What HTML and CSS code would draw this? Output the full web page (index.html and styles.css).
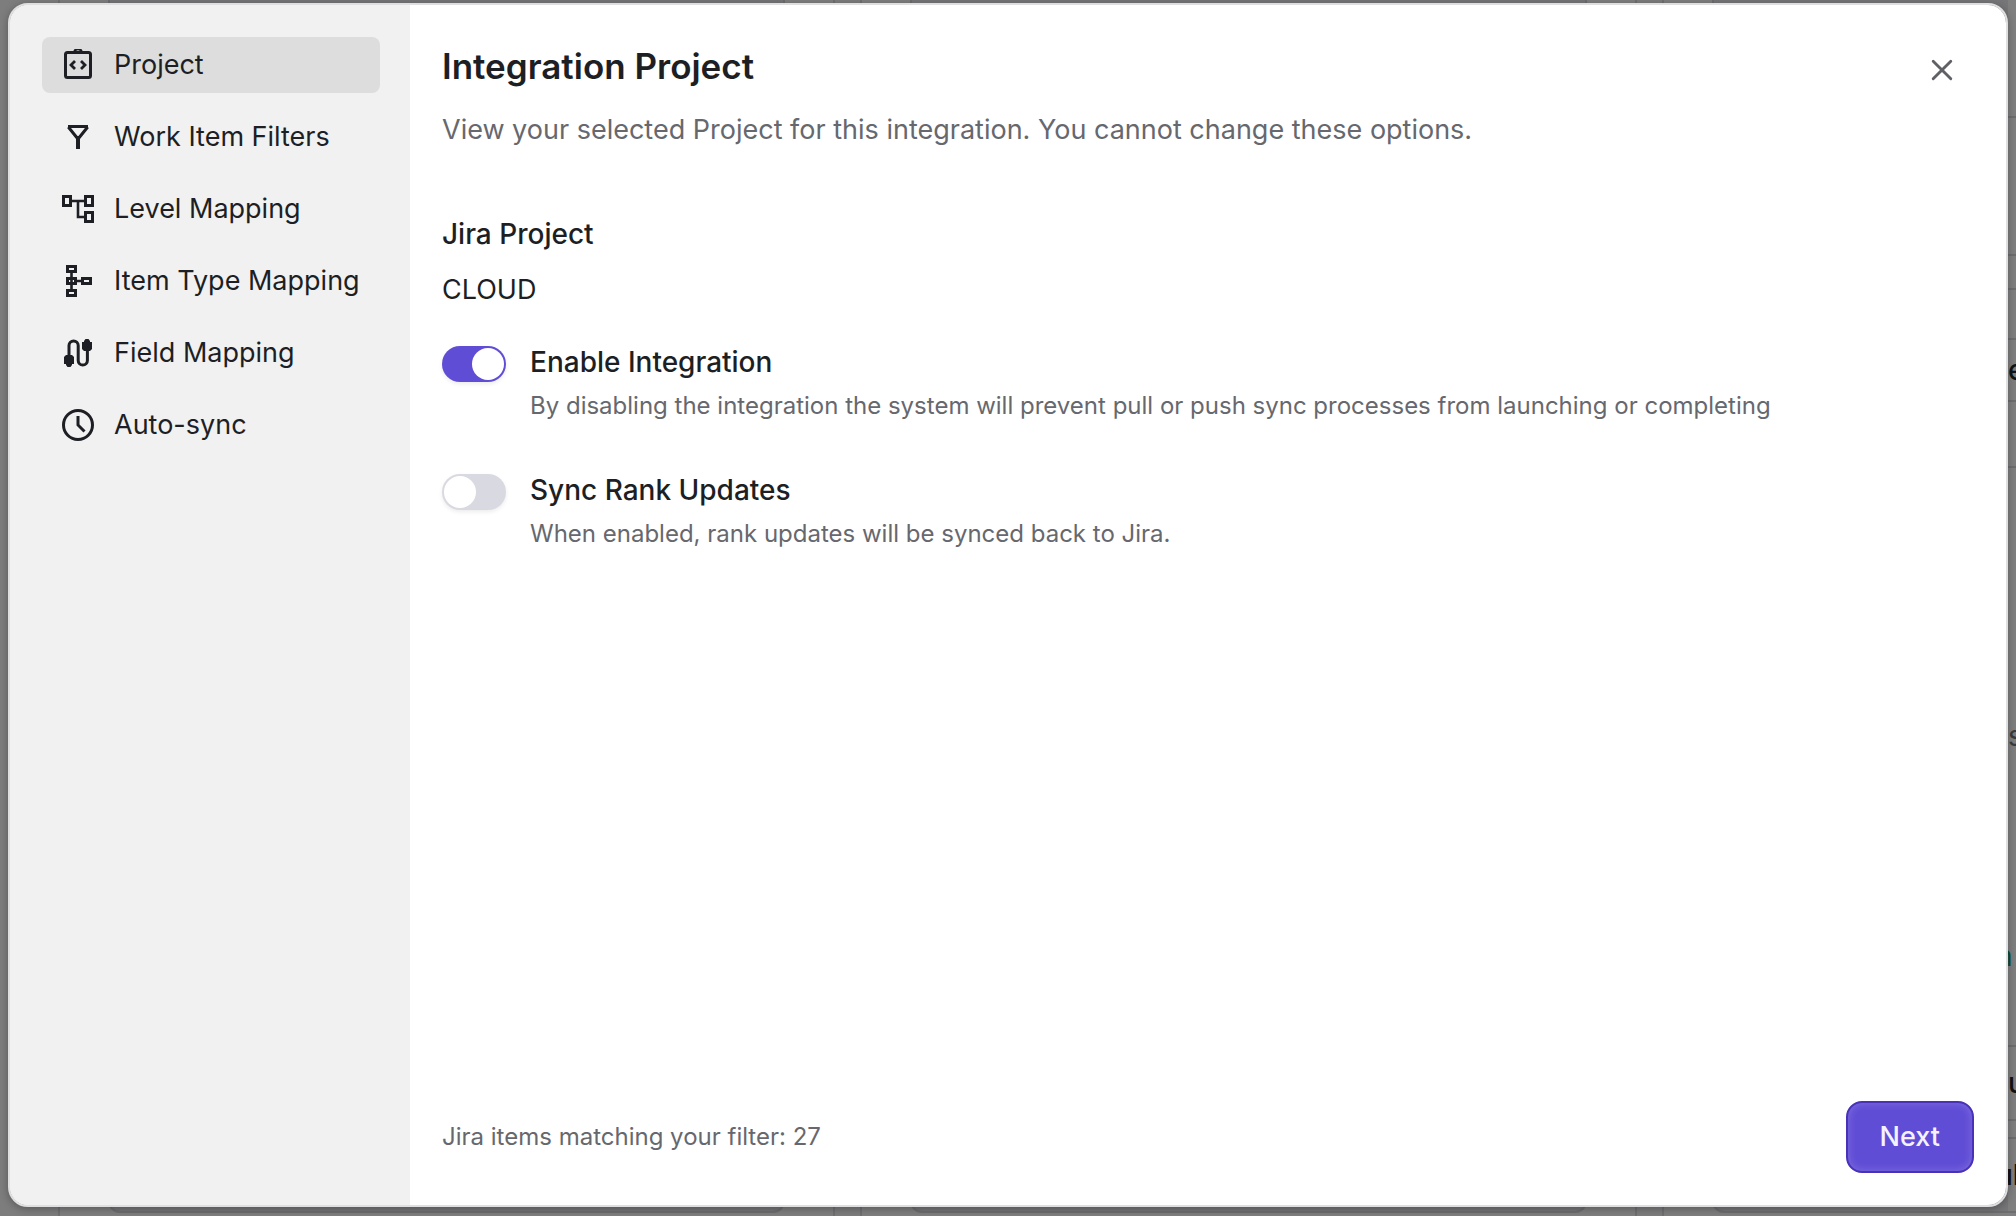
FILE: index.html
```html
<!DOCTYPE html>
<html lang="en">
<head>
<meta charset="utf-8">
<title>Integration Project</title>
<link rel="stylesheet" href="styles.css">
</head>
<body>
<div class="board" aria-hidden="true">
  <div class="board-column"><div class="board-card"></div></div>
  <div class="board-column"><div class="board-card"></div></div>
  <div class="board-column"><div class="board-card"></div></div>
</div>
<div class="board-rows" aria-hidden="true">
  <div class="row row-top"></div>
  <div class="row row-head"></div>
  <div class="row row-gap"></div>
  <div class="row row-bar"></div>
  <div class="row row-title">e</div>
  <div class="row row-line"></div>
  <div class="row row-body"><span class="muted">s</span><span class="accent">n</span></div>
  <div class="row row-title row-tall">u</div>
  <div class="row row-space"></div>
  <div class="row row-title row-tall row-cut">ul</div>
</div>

<div class="modal" role="dialog" aria-labelledby="dialog-title">
  <nav class="sidebar">
    <a class="nav-item active" href="#project">
      <svg class="icon" viewBox="0 0 32 32"><rect x="3.5" y="3.5" width="25" height="25" rx="2" fill="none" stroke="currentColor" stroke-width="3"/><path d="M12.500 3.500a3.500 3.500 0 0 1 7 0" fill="none" stroke="currentColor" stroke-width="2.600"/><path d="M13 12l-4 4 4 4M19 12l4 4-4 4" fill="none" stroke="currentColor" stroke-width="2.800"/></svg>
      <span>Project</span>
    </a>
    <a class="nav-item" href="#filters">
      <svg class="icon" viewBox="0 0 32 32"><path d="M6 5.5h20M6.300 6l9.700 12L25.700 6" fill="none" stroke="currentColor" stroke-width="3"/><path d="M16 15v13" stroke="currentColor" stroke-width="4"/></svg>
      <span>Work Item Filters</span>
    </a>
    <a class="nav-item" href="#levels">
      <svg class="icon" viewBox="0 0 32 32" fill="none" stroke="currentColor" stroke-width="3"><path d="M10 8h12M16 8v16h6" stroke-width="2.600"/><rect x="1.500" y="3.500" width="7" height="9"/><rect x="23.500" y="3.500" width="7" height="9"/><rect x="23.500" y="19.500" width="7" height="9"/></svg>
      <span>Level Mapping</span>
    </a>
    <a class="nav-item" href="#types">
      <svg class="icon" viewBox="0 0 32 32" fill="none" stroke="currentColor" stroke-width="3"><path d="M9.500 8v16M14 16h7" stroke-width="2.600"/><rect x="5.500" y="1.500" width="8" height="5"/><rect x="5.500" y="13.500" width="8" height="5"/><rect x="5.500" y="25.500" width="8" height="5"/><rect x="20.500" y="13.500" width="8" height="5"/></svg>
      <span>Item Type Mapping</span>
    </a>
    <a class="nav-item" href="#fields">
      <svg class="icon" viewBox="0 0 32 32"><path d="M7 20V8.500a4.600 4.600 0 0 1 9.200 0v15a4.600 4.600 0 0 0 9.200 0V12" fill="none" stroke="currentColor" stroke-width="3"/><path d="M4 18h6l2 2v7h-2v1l-1.500 2h-3L4 28v-1H2v-7zM22 4l1.500-2h3L28 4v1h2v7l-2 2h-6l-2-2V5h2z" fill="currentColor"/></svg>
      <span>Field Mapping</span>
    </a>
    <a class="nav-item" href="#autosync">
      <svg class="icon" viewBox="0 0 32 32" fill="none" stroke="currentColor" stroke-width="3"><circle cx="16" cy="16" r="14.500"/><path d="M16 7v9l6.500 6.500"/></svg>
      <span>Auto-sync</span>
    </a>
  </nav>

  <main class="content">
    <header class="header">
      <div class="heading">
        <h1 class="title" id="dialog-title">Integration Project</h1>
        <p class="subtitle">View your selected Project for this integration. You cannot change these options.</p>
      </div>
      <button class="close" type="button" aria-label="Close">
        <svg class="close-icon" viewBox="0 0 20 20"><path d="M2 2l16 16M18 2L2 18" fill="none" stroke="currentColor" stroke-width="2.600" stroke-linecap="round"/></svg>
      </button>
    </header>

    <dl class="project">
      <dt class="project-label">Jira Project</dt>
      <dd class="project-value">CLOUD</dd>
    </dl>

    <div class="options">
      <div class="option">
        <input class="switch" type="checkbox" id="enable" aria-describedby="enable-help" checked>
        <div class="option-text">
          <label class="option-label" for="enable">Enable Integration</label>
          <p class="option-help" id="enable-help">By disabling the integration the system will prevent pull or push sync processes from launching or completing</p>
        </div>
      </div>
      <div class="option">
        <input class="switch" type="checkbox" id="rank" aria-describedby="rank-help">
        <div class="option-text">
          <label class="option-label" for="rank">Sync Rank Updates</label>
          <p class="option-help" id="rank-help">When enabled, rank updates will be synced back to Jira.</p>
        </div>
      </div>
    </div>

    <footer class="footer">
      <p class="match-count">Jira items matching your filter: 27</p>
      <button class="next" type="button">Next</button>
    </footer>
  </main>
</div>
</body>
</html>
```

FILE: styles.css
```css
* {
  box-sizing: border-box;
}

body {
  margin: 0;
  min-height: 100vh;
  padding: 3px 8px 9px;
  display: flex;
  position: relative;
  overflow: hidden;
  background: #7d7d7e;
  color: #1d1f24;
  font-family: Inter, "Liberation Sans", sans-serif;
  font-size: 27px;
  line-height: 40px;
}

h1, p, dl, dd {
  margin: 0;
}

/* Dimmed board behind the dialog */
.board {
  position: absolute;
  inset: 0;
  padding-left: 58px;
  display: flex;
  gap: 25px;
  overflow: hidden;
}

.board-column {
  flex: 0 0 777px;
  padding: 0 48px 3px;
  display: flex;
  border: solid #707073;
  border-width: 0 2px;
  background: #7f7f7f;
}

.board-card {
  flex: 1;
  border: 2px solid #6d6d70;
  border-top: 0;
  border-radius: 0 0 12px 12px;
  background: #767678;
}

.board-rows {
  position: absolute;
  top: 0;
  right: 0;
  bottom: 0;
  width: 8px;
  background: #7f7f7f;
  color: #111214;
  font-size: 28px;
  overflow: hidden;
}

.row {
  border-bottom: 2px solid #6e6e71;
}

.row-top { height: 118px; }
.row-head { height: 138px; }
.row-gap { height: 34px; }
.row-bar { height: 50px; }
.row-title { height: 62px; line-height: 60px; font-weight: 500; }
.row-line { height: 66px; }
.row-body { height: 579px; padding-top: 248px; display: flex; flex-direction: column; gap: 180px; }
.row-tall { height: 74px; line-height: 72px; }
.row-space { height: 18px; }
.row-cut { text-indent: -12px; }
.muted { color: #3a3b3e; }
.accent { color: #064d3b; text-indent: -12px; }

/* Dialog */
.modal {
  flex: 1;
  display: flex;
  position: relative;
  overflow: hidden;
  border: 2px solid #dedfe0;
  border-radius: 20px;
  background: #fff;
  background-clip: padding-box;
  box-shadow: 0 2px 8px rgba(0, 0, 0, 0.3);
}

.sidebar {
  flex: 0 0 400px;
  min-width: 0;
  padding: 32px 30px 32px 32px;
  display: flex;
  flex-direction: column;
  gap: 16px;
  background: #f1f1f1;
}

.nav-item {
  height: 56px;
  padding: 0 8px 0 20px;
  display: flex;
  align-items: center;
  gap: 20px;
  border-radius: 8px;
  color: inherit;
  text-decoration: none;
  white-space: nowrap;
}

.nav-item.active {
  background: #ddd;
}

.icon {
  flex: none;
  width: 32px;
  height: 32px;
}

.content {
  flex: 1;
  min-width: 0;
  padding: 37px 32px 32px;
  display: flex;
  flex-direction: column;
}

.header {
  display: flex;
  justify-content: space-between;
  align-items: flex-start;
}

.title {
  font-size: 35px;
  line-height: 48px;
  font-weight: 600;
}

.subtitle {
  margin-top: 20px;
  color: #66686e;
}

.close {
  width: 64px;
  height: 56px;
  padding: 0;
  display: grid;
  place-items: center;
  border: 0;
  background: none;
  color: #606165;
}

.close-icon {
  width: 22px;
  height: 22px;
}

.project {
  margin-top: 64px;
}

.project-label,
.option-label {
  font-size: 28px;
  font-weight: 500;
}

.project-value {
  margin-top: 16px;
}

.options {
  margin-top: 32px;
  display: flex;
  flex-direction: column;
  gap: 48px;
}

.option {
  display: flex;
  gap: 24px;
}

.option-label {
  display: block;
}

.option-help {
  margin-top: 8px;
}

.option-help,
.match-count {
  color: #66686e;
  font-size: 24px;
  line-height: 32px;
}

.switch {
  appearance: none;
  flex: none;
  width: 64px;
  height: 36px;
  margin: 4px 0 0;
  padding: 2px;
  display: flex;
  border-radius: 18px;
  background: #d9d9e2;
  box-shadow: 0 2px 4px rgba(0, 0, 0, 0.08);
}

.switch::before {
  content: "";
  width: 32px;
  height: 32px;
  border-radius: 50%;
  background: #fff;
}

.switch:checked {
  justify-content: flex-end;
  background: #604dd6;
}

.footer {
  margin-top: auto;
  display: flex;
  align-items: center;
  justify-content: space-between;
}

.next {
  height: 72px;
  padding: 0 32px;
  border: 2px solid #4932b8;
  border-radius: 16px;
  background: #604dd6;
  box-shadow: inset 0 0 8px rgba(255, 255, 255, 0.2);
  color: #f4f2ff;
  font: inherit;
  font-weight: 500;
}
```
